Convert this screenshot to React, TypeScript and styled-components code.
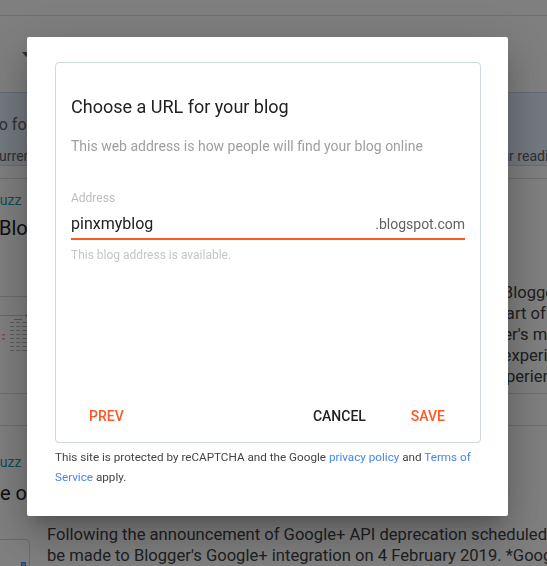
import React from "react";
import styled, { createGlobalStyle } from "styled-components";

const GlobalStyle = createGlobalStyle`
  html, body { margin: 0; padding: 0; }
  body {
    font-family: Roboto, "Noto Sans", Arial, sans-serif;
    background: #ffffff;
    overflow: hidden;
  }
  * { box-sizing: border-box; }
`;

/* ---------- background page (dimmed by the overlay) ---------- */

const Page = styled.div`
  width: 547px;
  height: 566px;
  overflow: hidden;
  background: #ffffff;
  color: #212121;
`;

const TopStrip = styled.div`
  height: 16px;
  border-bottom: 1px solid #dadce0;
`;

const Toolbar = styled.div`
  height: 76px;
  display: flex;
  align-items: center;
  padding-left: 22px;
`;

const Caret = styled.span`
  width: 0;
  height: 0;
  border-left: 4px solid transparent;
  border-right: 4px solid transparent;
  border-top: 5px solid #5f6368;
`;

const Banner = styled.div`
  height: 74px;
  background: #e8f0fe;
  border-top: 1px solid #c9d7ec;
  border-bottom: 1px solid #c9d7ec;
  padding-top: 22px;
  display: flex;
  flex-direction: column;
  gap: 11px;
  white-space: nowrap;
`;

const BannerLine = styled.div<{ $size: number }>`
  font-size: ${(p) => p.$size}px;
  line-height: 20px;
  margin-left: -10px;
  color: #5f6368;
`;

const Post = styled.section<{ $top: number; $pad: number }>`
  margin-top: ${(p) => p.$top}px;
  padding-top: ${(p) => p.$pad}px;
  padding-bottom: 6px;
  border-top: 1px solid #dadce0;
  border-bottom: 1px solid #dadce0;
  white-space: nowrap;
`;

const BlogName = styled.div`
  font-size: 14px;
  line-height: 20px;
  margin-left: -9px;
  color: #1a9bb0;
`;

const PostTitle = styled.div<{ $shift: number; $gap: number }>`
  font-size: 20px;
  line-height: 28px;
  margin-top: ${(p) => p.$gap}px;
  margin-left: ${(p) => p.$shift}px;
  color: #202124;
`;

const PostBody = styled.div<{ $gap: number }>`
  display: flex;
  align-items: flex-start;
  gap: 17px;
  margin-top: ${(p) => p.$gap}px;
`;

const Thumb = styled.div<{ $top: number; $framed?: boolean }>`
  flex: none;
  width: 60px;
  height: 90px;
  margin-left: -30px;
  margin-top: ${(p) => p.$top}px;
  border-top: 1px solid #d5d5d5;
  ${(p) =>
    p.$framed
      ? `border: 1px solid #d5d5d5; border-radius: 4px; position: relative;`
      : ``}
`;

const ThumbDot = styled.span`
  position: absolute;
  right: 3px;
  top: 22px;
  width: 5px;
  height: 5px;
  border: 1px solid #4285f4;
  background: #8ab4f8;
`;

const Snippet = styled.div`
  display: flex;
  flex-direction: column;
  font-size: 16.6px;
  line-height: 21px;
  color: #3c4043;
`;

/* ---------- dialog ---------- */

const Overlay = styled.div`
  position: fixed;
  inset: 0;
  background: rgba(0, 0, 0, 0.5);
  padding: 37px 0 0 27px;
`;

const Dialog = styled.div`
  width: 481px;
  height: 479px;
  background: #ffffff;
  border-radius: 2px;
  box-shadow: 0 11px 15px -7px rgba(0, 0, 0, 0.2),
    0 24px 38px 3px rgba(0, 0, 0, 0.14), 0 9px 46px 8px rgba(0, 0, 0, 0.12);
  padding: 25px 27px 0 28px;
  display: flex;
  flex-direction: column;
`;

const Card = styled.div`
  height: 381px;
  border: 1px solid #cfd8dc;
  border-radius: 4px;
  padding: 32px 15px 8px 15px;
  display: flex;
  flex-direction: column;
`;

const Title = styled.h2`
  margin: 0;
  font-size: 18px;
  line-height: 24px;
  font-weight: 400;
  color: #212121;
`;

const Subtitle = styled.p`
  margin: 17px 0 0;
  font-size: 14px;
  line-height: 20px;
  color: #9e9e9e;
`;

const Field = styled.div`
  margin-top: 34px;
  display: flex;
  flex-direction: column;
`;

const Label = styled.label`
  font-size: 12px;
  line-height: 16px;
  color: #bdbdbd;
`;

const InputRow = styled.div`
  margin-top: 6px;
  display: flex;
  align-items: baseline;
  justify-content: space-between;
  padding-bottom: 2px;
  border-bottom: 2px solid #ff5722;
`;

const Value = styled.span`
  font-size: 16px;
  line-height: 24px;
  color: #212121;
`;

const Suffix = styled.span`
  font-size: 14px;
  line-height: 24px;
  color: #616161;
`;

const Helper = styled.div`
  margin-top: 7px;
  font-size: 12px;
  line-height: 16px;
  color: #c6c6c6;
`;

const Actions = styled.div`
  margin-top: auto;
  margin-right: 2px;
  display: flex;
  align-items: center;
  gap: 9px;
`;

const Spacer = styled.div`
  flex: 1;
`;

const TextButton = styled.button<{ $accent?: boolean }>`
  height: 36px;
  padding: 0 18px;
  border: none;
  background: transparent;
  font-family: Roboto, "Noto Sans", Arial, sans-serif;
  font-size: 14px;
  line-height: 20px;
  font-weight: 500;
  text-transform: uppercase;
  cursor: pointer;
  color: ${(p) => (p.$accent ? "#ff5722" : "#212121")};
`;

const Notice = styled.p`
  margin: 4px 0 0;
  font-size: 11.7px;
  line-height: 20px;
  color: #444444;
`;

const Link = styled.a`
  color: #4285f4;
  text-decoration: none;
`;

function TableThumb() {
  const rows = [0, 1, 2, 3, 4, 5, 6, 7];
  return (
    <svg width="60" height="60" viewBox="0 0 60 60">
      <rect x="0" y="18" width="60" height="1" fill="#d0d0d0" />
      <rect x="56" y="17" width="3" height="3" fill="#b0b0b0" />
      {rows.map((r) => (
        <g key={r}>
          <rect x="40" y={25 + r * 4} width="4" height="1" fill="#bdbdbd" />
          <rect x="46" y={25 + r * 4} width="4" height="1" fill="#bdbdbd" />
          <rect x="52" y={25 + r * 4} width="5" height="1" fill="#bdbdbd" />
        </g>
      ))}
      <rect x="44" y="22" width="8" height="1" fill="#b5b5b5" />
      <rect x="32" y="37" width="3" height="1.5" fill="#e8a0a0" />
      <rect x="32" y="41" width="3" height="1.5" fill="#e8a0a0" />
    </svg>
  );
}

export default function App() {
  return (
    <>
      <GlobalStyle />
      <Page>
        <TopStrip />
        <Toolbar>
          <Caret />
        </Toolbar>
        <Banner>
          <BannerLine $size={16}>To follow blogs you like, add them to your reading list</BannerLine>
          <BannerLine $size={14}>
            Currently, blogs you follow with Google+ will move here so you can keep up with your reading list
          </BannerLine>
        </Banner>

        <Post $top={12} $pad={11}>
          <BlogName>Buzz</BlogName>
          <PostTitle $shift={-1} $gap={4}>Blogger&apos;s new look is here</PostTitle>
          <PostBody $gap={40}>
            <Thumb $top={14}>
              <TableThumb />
            </Thumb>
            <Snippet>
              <div>We have been working hard over the past years to ensure that Blogger</div>
              <div>continues to be a great place for your blogs. As an important part of that</div>
              <div>work, we are refreshing the designs of Blogger, and also Blogger&apos;s mobile app so</div>
              <div>you can enjoy a faster, cleaner, simpler and a more consistent experience on every</div>
              <div>device. Let us know what you think of the redesigns and the experience</div>
            </Snippet>
          </PostBody>
        </Post>

        <Post $top={31} $pad={26}>
          <BlogName>Buzz</BlogName>
          <PostTitle $shift={-80} $gap={7}>An update on Google+ and Blogger</PostTitle>
          <PostBody $gap={17}>
            <Thumb $top={15} $framed>
              <ThumbDot />
            </Thumb>
            <Snippet>
              <div>Following the announcement of Google+ API deprecation scheduled for March 2019, a number of changes will</div>
              <div>be made to Blogger&apos;s Google+ integration on 4 February 2019. *Google+ widgets</div>
            </Snippet>
          </PostBody>
        </Post>
      </Page>

      <Overlay>
        <Dialog role="dialog" aria-modal="true">
          <Card>
            <Title>Choose a URL for your blog</Title>
            <Subtitle>This web address is how people will find your blog online</Subtitle>
            <Field>
              <Label>Address</Label>
              <InputRow>
                <Value>pinxmyblog</Value>
                <Suffix>.blogspot.com</Suffix>
              </InputRow>
              <Helper>This blog address is available.</Helper>
            </Field>
            <Actions>
              <TextButton $accent>Prev</TextButton>
              <Spacer />
              <TextButton>Cancel</TextButton>
              <TextButton $accent>Save</TextButton>
            </Actions>
          </Card>
          <Notice>
            This site is protected by reCAPTCHA and the Google <Link href="#">privacy policy</Link> and{" "}
            <Link href="#">Terms of Service</Link> apply.
          </Notice>
        </Dialog>
      </Overlay>
    </>
  );
}
